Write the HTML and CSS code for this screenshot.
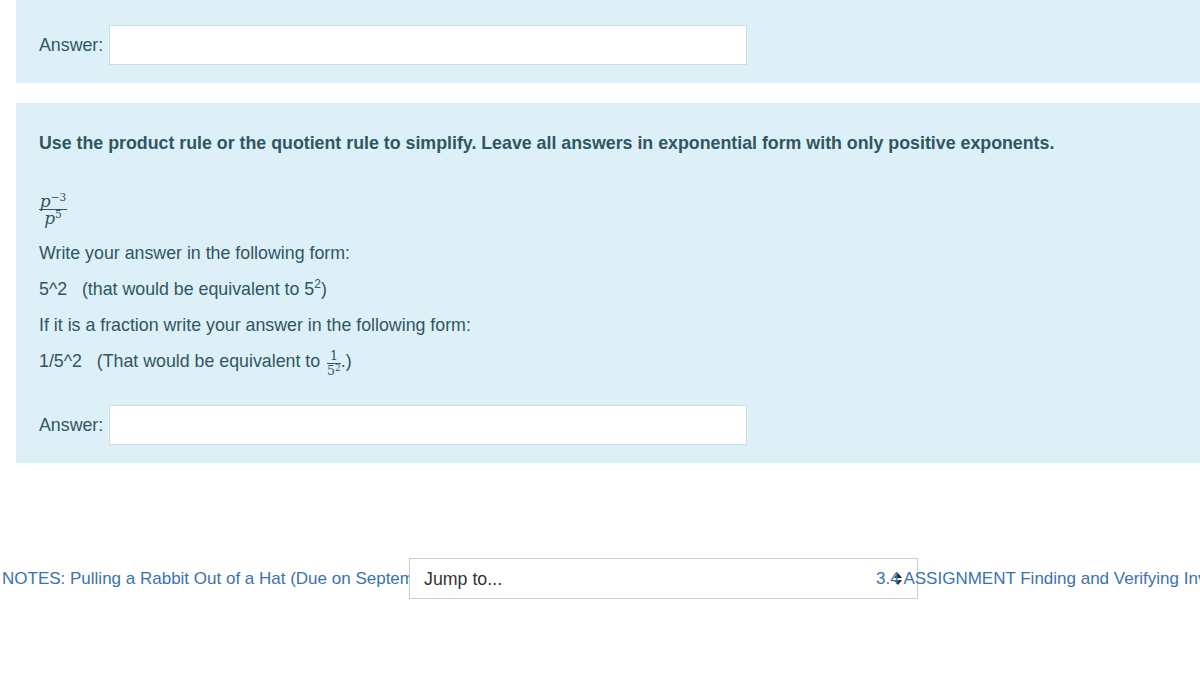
FILE: index.html
```html
<!DOCTYPE html>
<html>
<head>
<meta charset="utf-8">
<link rel="stylesheet" href="styles.css">
</head>
<body>
<div class="panel panel-top">
  <div class="answer-row">
    <label class="answer-label">Answer:</label>
    <input class="answer-input" type="text">
  </div>
</div>

<div class="panel panel-q">
  <p class="q-title">Use the product rule or the quotient rule to simplify. Leave all answers in exponential form with only positive exponents.</p>
  <div class="math">
    <span class="frac">
      <span class="num"><i>p</i><sup>−3</sup></span>
      <span class="den"><i>p</i><sup>5</sup></span>
    </span>
  </div>
  <p class="line">Write your answer in the following form:</p>
  <p class="line">5^2&nbsp;&nbsp; (that would be equivalent to 5<sup class="sup">2</sup>)</p>
  <p class="line">If it is a fraction write your answer in the following form:</p>
  <p class="line">1/5^2&nbsp;&nbsp; (That would be equivalent to <span class="sfrac"><span class="snum">1</span><span class="sden">5<sup>2</sup></span></span>.)</p>
  <div class="answer-row answer-row-q">
    <label class="answer-label">Answer:</label>
    <input class="answer-input" type="text">
  </div>
</div>

<nav class="footer-nav">
  <a class="nav-prev" href="#">NOTES: Pulling a Rabbit Out of a Hat (Due on September 10)</a>
  <select class="jump"><option>Jump to...</option></select>
  <a class="nav-next" href="#">3.4 ASSIGNMENT Finding and Verifying Inverses</a>
</nav>
</body>
</html>
```

FILE: styles.css
```css
html, body {
  margin: 0;
  padding: 0;
  background: #ffffff;
  font-family: "Liberation Sans", Arial, sans-serif;
  font-size: 17.8px;
  color: #2f5663;
}

.panel {
  background: #def0f7;
  margin-left: 16px;
}

.panel-top {
  padding: 25px 0 19px 23px;
  height: 39px;
}

.answer-row {
  display: flex;
  align-items: center;
  gap: 6px;
}

.answer-label {
  line-height: 24px;
}

.answer-input {
  width: 638px;
  height: 40px;
  box-sizing: border-box;
  border: 1px solid #cfdde2;
  background: #fff;
  margin: 0;
  padding: 0;
}

.panel-q {
  margin-top: 20px;
  padding: 27px 0 18px 23px;
}

.q-title {
  margin: 0;
  font-weight: bold;
  line-height: 26px;
}

.math {
  margin-top: 36px;
  height: 34px;
  display: flex;
}

.frac {
  display: flex;
  flex-direction: column;
  align-items: center;
  font-family: "DejaVu Serif", "Liberation Serif", serif;
  font-size: 17px;
  width: 28px;
}

.frac i {
  font-style: italic;
}

.frac sup {
  font-size: 10.5px;
  vertical-align: 6px;
  line-height: 0;
  font-style: normal;
}

.num {
  line-height: 15px;
  padding-top: 2px;
  border-bottom: 1px solid #2f5663;
  width: 100%;
  text-align: center;
}

.den {
  line-height: 15px;
  padding-top: 1px;
}

.line {
  margin: 10px 0 0 0;
  line-height: 26px;
  height: 26px;
}

.math + .line {
  margin-top: 14px;
}

.sup {
  font-size: 12px;
  vertical-align: 7px;
  line-height: 0;
}

.sfrac {
  display: inline-block;
  vertical-align: middle;
  font-family: "DejaVu Serif", "Liberation Serif", serif;
  font-size: 12.5px;
  margin: -4px 0 -4px 2px;
  line-height: 12px;
  position: relative;
  top: 1px;
}

.snum {
  display: block;
  line-height: 12px;
  border-bottom: 1px solid #2f5663;
  padding: 0 2px 1px;
  text-align: center;
}

.sden {
  display: block;
  line-height: 13px;
  text-align: center;
}

.sden sup {
  font-size: 9px;
  vertical-align: 4px;
  line-height: 0;
}

.answer-row-q {
  margin-top: 31px;
}

.footer-nav {
  margin-top: 95px;
  display: flex;
  align-items: center;
  height: 41px;
  font-size: 17px;
}

.nav-prev {
  width: 407px;
  padding-left: 2px;
  white-space: nowrap;
  overflow: hidden;
  color: #3a72b0;
  text-decoration: none;
  flex: none;
}

.jump {
  flex: none;
  width: 509px;
  height: 41px;
  box-sizing: border-box;
  border: 1px solid #cccccc;
  border-radius: 0;
  background-color: #fff;
  background-image: url("data:image/svg+xml;utf8,<svg xmlns='http://www.w3.org/2000/svg' width='8' height='12' viewBox='0 0 8 12'><path d='M4 0 L8 5 L0 5 Z M0 7 L8 7 L4 12 Z' fill='%23222'/></svg>");
  background-repeat: no-repeat;
  background-position: right 15px center;
  -webkit-appearance: none;
  appearance: none;
  font-family: "Liberation Sans", Arial, sans-serif;
  font-size: 17.8px;
  color: #333;
  padding: 0 0 0 14px;
  margin: 0;
}

.nav-next {
  flex: none;
  margin-left: -42px;
  white-space: nowrap;
  overflow: hidden;
  width: 324px;
  color: #3a72b0;
  text-decoration: none;
  position: relative;
}
```
